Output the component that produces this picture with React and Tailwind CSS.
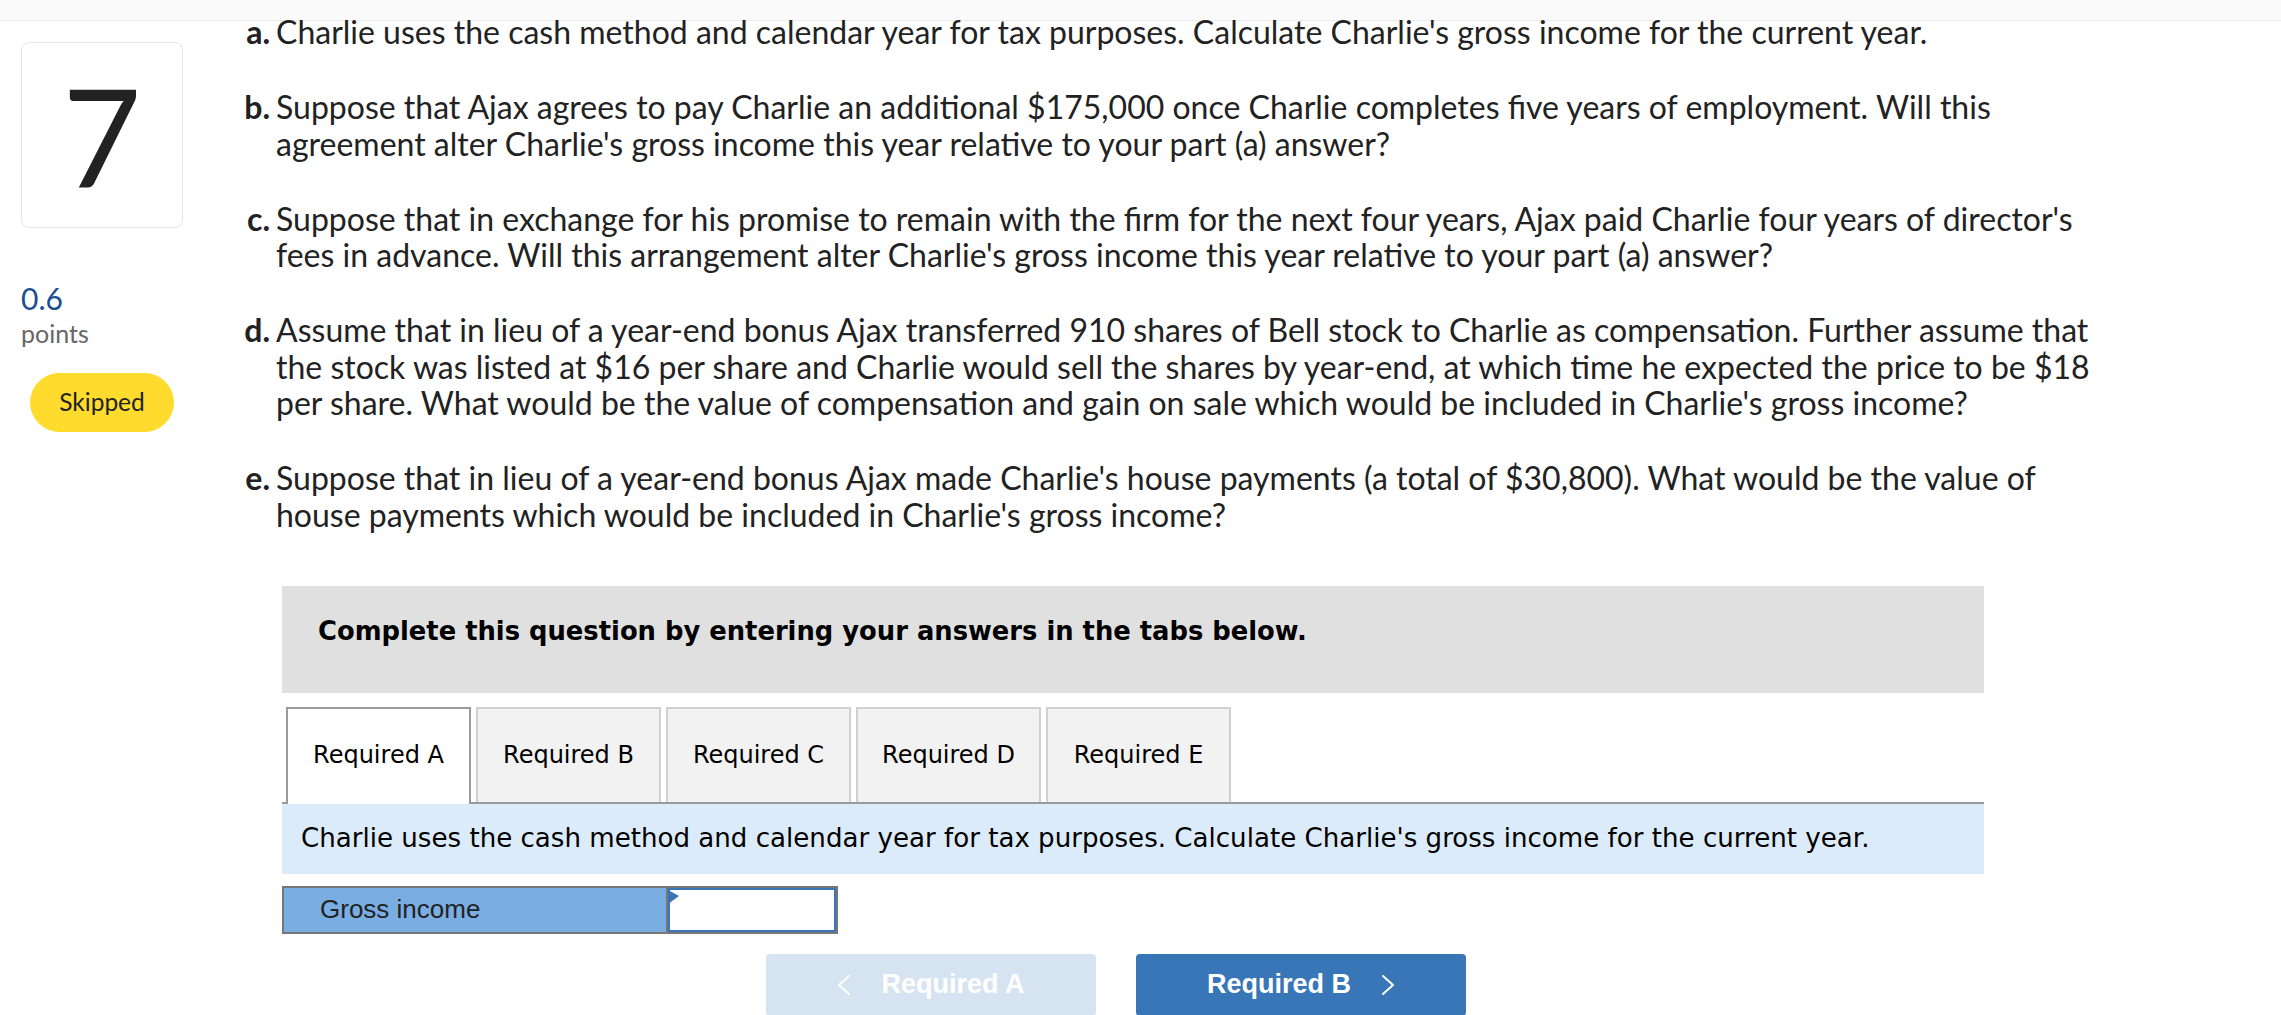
import React from 'react';

const questions = [
    {
        label: 'a.',
        lines: ["Charlie uses the cash method and calendar year for tax purposes. Calculate Charlie's gross income for the current year."],
    },
    {
        label: 'b.',
        lines: [
            'Suppose that Ajax agrees to pay Charlie an additional $175,000 once Charlie completes five years of employment. Will this',
            "agreement alter Charlie's gross income this year relative to your part (a) answer?",
        ],
    },
    {
        label: 'c.',
        lines: [
            "Suppose that in exchange for his promise to remain with the firm for the next four years, Ajax paid Charlie four years of director's",
            "fees in advance. Will this arrangement alter Charlie's gross income this year relative to your part (a) answer?",
        ],
    },
    {
        label: 'd.',
        lines: [
            'Assume that in lieu of a year-end bonus Ajax transferred 910 shares of Bell stock to Charlie as compensation. Further assume that',
            'the stock was listed at $16 per share and Charlie would sell the shares by year-end, at which time he expected the price to be $18',
            "per share. What would be the value of compensation and gain on sale which would be included in Charlie's gross income?",
        ],
    },
    {
        label: 'e.',
        lines: [
            "Suppose that in lieu of a year-end bonus Ajax made Charlie's house payments (a total of $30,800). What would be the value of",
            "house payments which would be included in Charlie's gross income?",
        ],
    },
];

const tabs = ['Required A', 'Required B', 'Required C', 'Required D', 'Required E'];

const Chevron = ({ dir }) => (
    <svg width="14" height="20" viewBox="0 0 14 20" fill="none">
        <polyline
            points={dir === 'left' ? '12,1 2,10 12,19' : '2,1 12,10 2,19'}
            stroke="currentColor"
            strokeWidth="2"
            strokeLinecap="round"
            strokeLinejoin="round"
        />
    </svg>
);

const App = () => {
    return (
        <div className="min-h-screen bg-white text-[#222] font-['Lato',sans-serif]">
            <div className="h-[21px] bg-[#fafafa] border-b border-[#ececec]"></div>

            <div className="flex">
                {/* left rail */}
                <aside className="w-[237px] shrink-0 pl-[21px]">
                    <div className="mt-[21px] w-[162px] h-[186px] border border-[#e6e6e6] rounded-[8px] flex items-center justify-center">
                        <span className="text-[136px] leading-none text-[#222]">7</span>
                    </div>
                    <div className="mt-[55px] text-[30px] leading-[30px] text-[#1b4f91]">0.6</div>
                    <div className="mt-[6px] text-[25px] leading-[28px] text-[#666]">points</div>
                    <div className="mt-[26px] ml-[9px] w-[144px] h-[59px] rounded-full bg-[#fedb2d] flex items-center justify-center text-[24.5px] text-[#222]">
                        Skipped
                    </div>
                </aside>

                {/* question body */}
                <main className="flex-1 -mt-[7px]">
                    <div className="flex flex-col gap-[38.5px]">
                        {questions.map((q) => (
                            <div key={q.label} className="flex text-[32px] leading-[36.5px]">
                                <span className="w-[39px] shrink-0 pr-[6px] text-right font-bold">{q.label}</span>
                                <div>
                                    {q.lines.map((line, i) => (
                                        <span key={i} className="block whitespace-nowrap">{line}</span>
                                    ))}
                                </div>
                            </div>
                        ))}
                    </div>

                    <div className="mt-[52.5px] ml-[45px] w-[1702px]">
                        <div className="bg-[#e0e0e0] pt-[30px] pb-[47px] pl-[36px] font-['DejaVu_Sans',sans-serif] font-bold text-[25.8px] leading-[30px] text-black">
                            Complete this question by entering your answers in the tabs below.
                        </div>

                        <div className="mt-[14px] flex gap-[5px] pl-[4px] border-b-2 border-[#9a9a9a] font-['DejaVu_Sans',sans-serif] text-[24px] text-black">
                            {tabs.map((t, i) =>
                                i === 0 ? (
                                    <div key={t} className="w-[185px] h-[97px] -mb-[2px] pb-[2px] bg-white border-2 border-b-0 border-[#9a9a9a] flex items-center justify-center">
                                        {t}
                                    </div>
                                ) : (
                                    <div key={t} className="w-[185px] h-[95px] bg-[#f2f2f2] border-2 border-b-0 border-[#d0d0d0] flex items-center justify-center">
                                        {t}
                                    </div>
                                )
                            )}
                        </div>

                        <div className="h-[70px] bg-[#dbebf9] flex items-center pl-[19px] font-['DejaVu_Sans',sans-serif] text-[26.1px] text-black">
                            Charlie uses the cash method and calendar year for tax purposes. Calculate Charlie's gross income for the current year.
                        </div>

                        <div className="mt-[12px] flex w-[556px] h-[48px] border-2 border-[#777]">
                            <div className="w-[382px] shrink-0 bg-[#7aaee3] flex items-center pl-[36px] font-['Liberation_Sans',sans-serif] text-[26px] text-[#222]">
                                Gross income
                            </div>
                            <div className="flex-1 border-l-2 border-[#777]">
                                <div className="relative h-full border-2 border-[#3a75b8] bg-white">
                                    <svg className="absolute top-0 -left-[2px]" width="11" height="14" viewBox="0 0 11 14">
                                        <polygon points="0,0 11,6 0,14" fill="#3a75b8" />
                                    </svg>
                                </div>
                            </div>
                        </div>

                        <div className="mt-[20px] ml-[484px] flex gap-[40px] font-['Liberation_Sans',sans-serif] font-bold text-[27px] text-white">
                            <button className="w-[330px] h-[62px] rounded-[4px] bg-[#d6e4f1] flex items-center justify-center gap-[30px]">
                                <Chevron dir="left" />
                                <span>Required A</span>
                            </button>
                            <button className="w-[330px] h-[62px] rounded-[4px] bg-[#3876b7] flex items-center justify-center gap-[30px]">
                                <span>Required B</span>
                                <Chevron dir="right" />
                            </button>
                        </div>
                    </div>
                </main>
            </div>
        </div>
    );
};

export default App;
